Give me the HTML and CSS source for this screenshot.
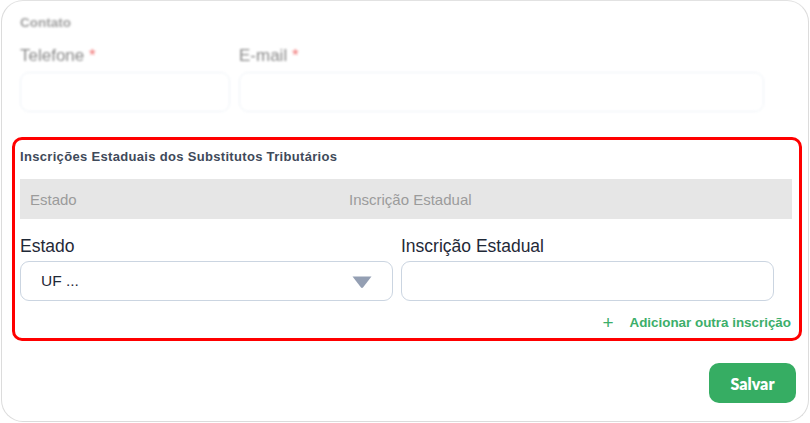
FILE: index.html
```html
<!DOCTYPE html>
<html lang="pt-BR">
<head>
<meta charset="utf-8">
<title>Cadastro</title>
<link rel="stylesheet" href="styles.css">
</head>
<body>
<div class="card">
  <section class="contact">
    <h3 class="contact-title">Contato</h3>
    <div class="contact-row">
      <div class="field field-phone">
        <label class="soft-label">Telefone <span class="req">*</span></label>
        <div class="soft-input"></div>
      </div>
      <div class="field field-mail">
        <label class="soft-label">E-mail <span class="req">*</span></label>
        <div class="soft-input"></div>
      </div>
    </div>
  </section>

  <section class="ie-box">
    <h4 class="ie-title">Inscrições Estaduais dos Substitutos Tributários</h4>
    <div class="ie-head">
      <span>Estado</span>
      <span>Inscrição Estadual</span>
    </div>
    <div class="ie-grid">
      <div class="ie-field">
        <label class="ie-label">Estado</label>
        <div class="select">
          <span>UF ...</span>
          <svg class="caret" width="20" height="12" viewBox="0 0 20 12"><path d="M0.5 0.5h19L11.2 11.2a1.6 1.6 0 0 1-2.4 0z" fill="#949fb3"/></svg>
        </div>
      </div>
      <div class="ie-field">
        <label class="ie-label">Inscrição Estadual</label>
        <div class="text-input"></div>
      </div>
    </div>
    <div class="ie-add">
      <span class="plus">+</span>
      <span>Adicionar outra inscrição</span>
    </div>
  </section>

  <div class="actions">
    <button class="btn-save">Salvar</button>
  </div>
</div>
</body>
</html>
```

FILE: styles.css
```css
* { box-sizing: border-box; }

html, body {
  margin: 0;
  background: #ffffff;
}

body {
  font-family: "Liberation Sans", Arial, sans-serif;
  width: 810px;
  height: 423px;
  overflow: hidden;
}

.card {
  margin: 0 0 0 1px;
  width: 808px;
  height: 422px;
  border: 1px solid #dcdcdc;
  border-top-color: #e2e2e2;
  border-radius: 22px;
  padding: 0 0 0 10px;
}

/* contact block (disabled, out of focus) */
.contact {
  filter: blur(0.9px);
  padding: 14px 0 0 8px;
  height: 136px;
}

.contact-title {
  margin: 0;
  font-size: 13.5px;
  font-weight: bold;
  color: #a0a0a0;
  line-height: 16px;
}

.contact-row {
  display: flex;
  gap: 9px;
  margin-top: 15px;
}

.field-phone { width: 210px; }
.field-mail { width: 525px; }

.soft-label {
  display: block;
  font-size: 17px;
  color: #8a8a8a;
  line-height: 20px;
  margin-bottom: 6px;
}

.req { color: #f07070; }

.soft-input {
  height: 40px;
  border: 1.5px solid #eef2f7;
  border-radius: 9px;
}

/* state registrations */
.ie-box {
  width: 790px;
  height: 204px;
  border: 3px solid #ff0000;
  border-radius: 10px;
  padding: 8px 7px 0 5px;
}

.ie-title {
  margin: 0;
  font-size: 13px;
  font-weight: bold;
  color: #3f4a5a;
  line-height: 17px;
  letter-spacing: 0.32px;
}

.ie-head {
  display: grid;
  grid-template-columns: 319px 1fr;
  align-items: center;
  height: 40px;
  margin-top: 14px;
  padding-left: 10px;
  background: #e6e6e6;
  font-size: 15px;
  color: #9b9b9b;
}

.ie-grid {
  display: grid;
  grid-template-columns: 373px 373px;
  column-gap: 8px;
  margin-top: 17px;
}

.ie-label {
  display: block;
  font-size: 17.5px;
  color: #1f2937;
  line-height: 20px;
  margin-bottom: 5px;
}

.select,
.text-input {
  height: 40px;
  border: 1px solid #cbd5e1;
  border-radius: 9px;
}

.select {
  display: flex;
  align-items: center;
  justify-content: space-between;
  padding: 0 20px 1px 20px;
  font-size: 15.5px;
  color: #1f2937;
}

.caret { margin-top: 2px; }

.ie-add {
  display: flex;
  justify-content: flex-end;
  align-items: center;
  gap: 16px;
  margin-top: 14px;
  padding-right: 1px;
  font-size: 13.4px;
  font-weight: bold;
  color: #3cae6a;
}

.plus {
  font-size: 19px;
  font-weight: normal;
  line-height: 12px;
}

/* footer */
.actions {
  display: flex;
  justify-content: flex-end;
  padding: 22px 12px 0 0;
}

.btn-save {
  width: 87px;
  height: 40px;
  border: none;
  border-radius: 10px;
  background: #36ad63;
  color: #ffffff;
  font-family: "Lato", "Open Sans", sans-serif;
  font-weight: 800;
  font-size: 16px;
}
```
